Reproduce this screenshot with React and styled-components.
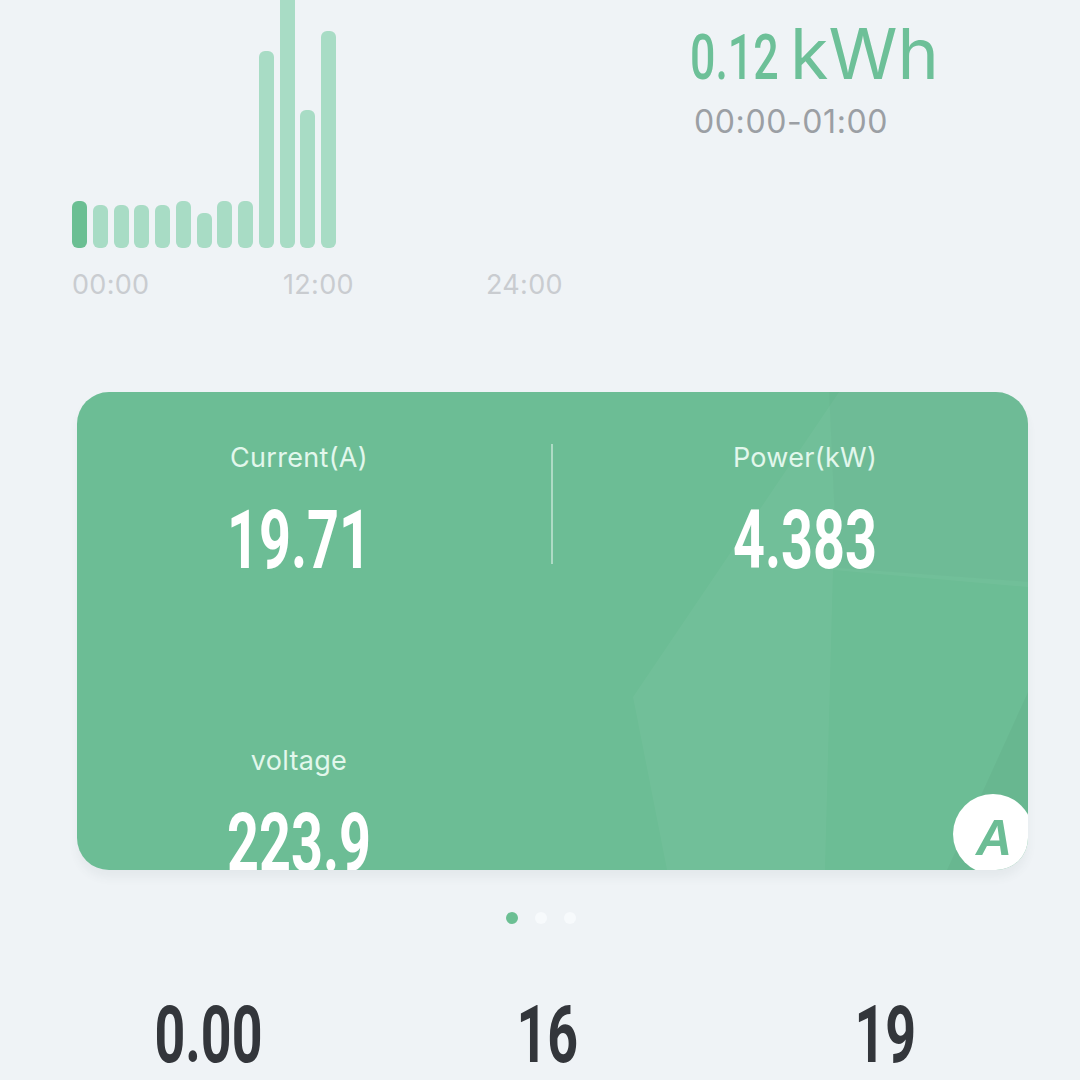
import React from "react";
import styled, { createGlobalStyle } from "styled-components";

const GlobalStyle = createGlobalStyle`
  html, body { margin: 0; padding: 0; background: #eff3f6; }
  * { box-sizing: border-box; }
`;

const Page = styled.div`
  width: 1080px;
  height: 1080px;
  overflow: hidden;
  background: #eff3f6;
  font-family: Inter, "Open Sans", sans-serif;
`;

const TopSection = styled.section`
  display: flex;
  padding-left: 72px;
`;

const ChartColumn = styled.div`
  width: 618px;
  display: flex;
  flex-direction: column;
`;

const Bars = styled.div`
  height: 248px;
  display: flex;
  align-items: flex-end;
  gap: 5.75px;
`;

const Bar = styled.div`
  width: 15px;
  border-radius: 6px;
  background: ${(p) => (p.$active ? "#6bbf93" : "#a8dcc5")};
  flex-shrink: 0;
`;

const Axis = styled.div`
  margin-top: 21px;
  display: grid;
  grid-template-columns: 211px 203px auto;
`;

const AxisLabel = styled.span`
  font-size: 27px;
  line-height: 32px;
  color: #c9ccd0;
  letter-spacing: 0.3px;
`;

const Summary = styled.div`
  padding-top: 19px;
  display: flex;
  flex-direction: column;
`;

const EnergyRow = styled.div`
  display: flex;
  align-items: baseline;
  color: #6dc098;
`;

const Condensed = styled.span`
  display: inline-block;
  font-family: Roboto, "Liberation Sans", sans-serif;
  font-size: ${(p) => p.$size}px;
  font-weight: ${(p) => p.$weight || 700};
  line-height: 1;
  color: ${(p) => p.$color || "#ffffff"};
  transform: scaleX(${(p) => p.$sx || 0.68});
  transform-origin: ${(p) => p.$origin || "center"};
  white-space: nowrap;
`;

const EnergyValue = styled(Condensed)`
  width: 100px;
`;

const Unit = styled.span`
  font-size: 70px;
  line-height: 1;
  font-weight: 400;
  letter-spacing: 0px;
`;

const Range = styled.div`
  margin-top: 15px;
  margin-left: 4px;
  font-size: 32px;
  line-height: 36px;
  color: #9b9fa4;
  letter-spacing: 0.6px;
`;

const Card = styled.div`
  position: relative;
  margin: 91px 0 0 77px;
  width: 951px;
  height: 478px;
  border-radius: 32px;
  background: #6cbd95;
  overflow: hidden;
  box-shadow: 0 8px 10px rgba(60, 80, 90, 0.06);
`;

const CardArt = styled.svg`
  position: absolute;
  inset: 0;
  width: 100%;
  height: 100%;
`;

const CardGrid = styled.div`
  position: relative;
  display: grid;
  grid-template-columns: 1fr 2px 1fr;
  column-gap: 52px;
  row-gap: 164px;
  padding: 50px 23px 0 22px;
`;

const Metric = styled.div`
  display: flex;
  flex-direction: column;
  align-items: center;
`;

const MetricLabel = styled.div`
  font-size: 27px;
  line-height: 32px;
  color: #e2f7ec;
  letter-spacing: 0.3px;
  margin-bottom: 25px;
`;

const Divider = styled.div`
  margin-top: 2px;
  width: 2px;
  height: 120px;
  background: rgba(255, 255, 255, 0.45);
`;

const Badge = styled.div`
  position: absolute;
  right: -5px;
  bottom: -4px;
  width: 80px;
  height: 80px;
  border-radius: 50%;
  background: #ffffff;
  display: flex;
  align-items: center;
  justify-content: center;
  padding-top: 8px;
  padding-left: 2px;
  font-family: "Liberation Sans", Arial, sans-serif;
  font-style: italic;
  font-weight: 700;
  font-size: 50px;
  line-height: 1;
  color: #6cbd95;
`;

const Dots = styled.div`
  margin-top: 42px;
  display: flex;
  justify-content: center;
  gap: 17px;
  padding-left: 1px;
`;

const Dot = styled.span`
  width: 12px;
  height: 12px;
  border-radius: 50%;
  background: ${(p) => (p.$active ? "#6bbf93" : "#f7fafc")};
`;

const Stats = styled.div`
  margin-top: 72px;
  display: grid;
  grid-template-columns: 340px 338px 338px;
  padding-left: 38px;
`;

const StatCell = styled.div`
  display: flex;
  justify-content: center;
`;

const barHeights = [47, 43, 43, 43, 43, 47, 35, 47, 47, 197, 268, 138, 217];

export default function App() {
  return (
    <>
      <GlobalStyle />
      <Page>
        <TopSection>
          <ChartColumn>
            <Bars>
              {barHeights.map((h, i) => (
                <Bar key={i} $active={i === 0} style={{ height: h }} />
              ))}
            </Bars>
            <Axis>
              <AxisLabel>00:00</AxisLabel>
              <AxisLabel>12:00</AxisLabel>
              <AxisLabel>24:00</AxisLabel>
            </Axis>
          </ChartColumn>
          <Summary>
            <EnergyRow>
              <EnergyValue $size={63} $weight={500} $sx={0.71} $origin="left" $color="#6dc098">
                0.12
              </EnergyValue>
              <Unit>kWh</Unit>
            </EnergyRow>
            <Range>00:00-01:00</Range>
          </Summary>
        </TopSection>

        <Card>
          <CardArt viewBox="0 0 951 478" preserveAspectRatio="none">
            <polygon points="556,305 762,0 951,0 951,195 756,178 748,478 590,478" fill="#ffffff" opacity="0.04" />
            <polygon points="752,0 951,0 951,190 760,176" fill="#000000" opacity="0.02" />
            <polygon points="870,478 951,300 951,478" fill="#000000" opacity="0.03" />
          </CardArt>
          <CardGrid>
            <Metric>
              <MetricLabel>Current(A)</MetricLabel>
              <Condensed $size={82}>19.71</Condensed>
            </Metric>
            <Divider />
            <Metric>
              <MetricLabel>Power(kW)</MetricLabel>
              <Condensed $size={82}>4.383</Condensed>
            </Metric>
            <Metric>
              <MetricLabel>voltage</MetricLabel>
              <Condensed $size={82}>223.9</Condensed>
            </Metric>
          </CardGrid>
          <Badge>A</Badge>
        </Card>

        <Dots>
          <Dot $active />
          <Dot />
          <Dot />
        </Dots>

        <Stats>
          <StatCell>
            <Condensed $size={79} $color="#33363b">0.00</Condensed>
          </StatCell>
          <StatCell>
            <Condensed $size={79} $color="#33363b">16</Condensed>
          </StatCell>
          <StatCell>
            <Condensed $size={79} $color="#33363b">19</Condensed>
          </StatCell>
        </Stats>
      </Page>
    </>
  );
}
